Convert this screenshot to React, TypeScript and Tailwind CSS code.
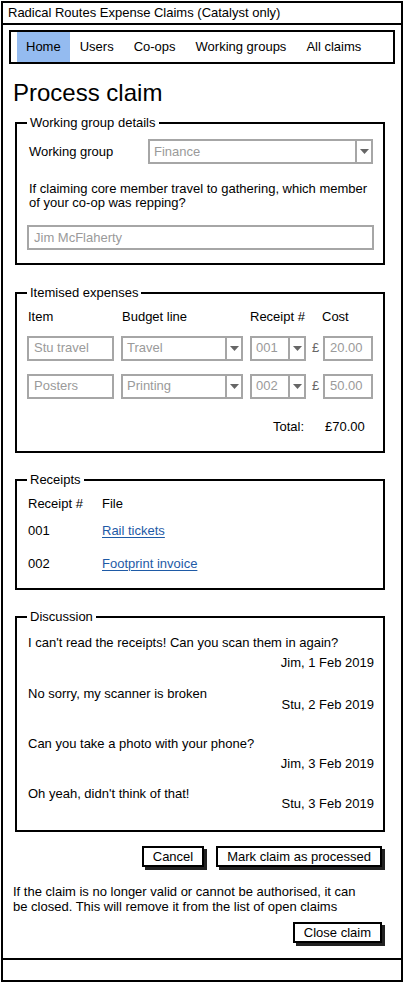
import React from 'react';

const font = { fontFamily: '"Liberation Sans", Arial, sans-serif' };

const Box = ({ w, h = 'h-[25px]', children, cls = '' }: { w: string; h?: string; children?: React.ReactNode; cls?: string }) => (
  <div className={`${w} ${h} ${cls} shrink-0 border-2 border-[#a6a6a6] bg-white flex items-center px-[5px] text-[#9a9a9a] text-[13px]`}>
    {children}
  </div>
);

const Select = ({ w, value }: { w: string; value: string }) => (
  <div className={`${w} h-[25px] shrink-0 border-2 border-[#a6a6a6] bg-white flex items-stretch text-[#9a9a9a] text-[13px]`}>
    <div className="flex-1 flex items-center px-[4px]">{value}</div>
    <div className="w-[16px] border-l-2 border-[#a6a6a6] flex items-center justify-center">
      <svg width="9" height="5" viewBox="0 0 9 5">
        <path d="M0 0 L9 0 L4.5 5 Z" fill="#666" />
      </svg>
    </div>
  </div>
);

const Group = ({ title, children, cls = '' }: { title: string; children: React.ReactNode; cls?: string }) => (
  <fieldset className={`shrink-0 ml-[12px] mr-[16px] border-2 border-black pl-[10px] pr-[8px] ${cls}`}>
    <legend className="px-[3px] text-[13px] leading-[16px]">{title}</legend>
    {children}
  </fieldset>
);

const Btn = ({ label, cls = '' }: { label: string; cls?: string }) => (
  <button className={`h-[21px] border-2 border-black bg-white shadow-[3px_3px_0_#222] px-[9px] text-[13px] leading-none ${cls}`}>
    {label}
  </button>
);

const messages = [
  { text: "I can't read the receipts! Can you scan them in again?", by: 'Jim, 1 Feb 2019', gap: 'mt-[3px]', top: 'mt-[1px]' },
  { text: 'No sorry, my scanner is broken', by: 'Stu, 2 Feb 2019', gap: '-mt-[6px]', top: 'mt-[6px]' },
  { text: 'Can you take a photo with your phone?', by: 'Jim, 3 Feb 2019', gap: 'mt-[3px]', top: 'mt-[14px]' },
  { text: "Oh yeah, didn't think of that!", by: 'Stu, 3 Feb 2019', gap: '-mt-[7px]', top: 'mt-[5px]' },
];

export default function App() {
  return (
    <div style={font} className="w-[404px] h-[983px] bg-white text-black text-[13px] pt-[1px] pl-[1px]">
      <div className="w-[402px] h-[981px] border-2 border-black flex flex-col">
        <div className="shrink-0 h-[22px] border-b-2 border-black flex items-center pl-[5px] text-[13px]">
          Radical Routes Expense Claims (Catalyst only)
        </div>

        <nav className="shrink-0 mt-[5px] mx-[6px] h-[34px] border-2 border-black flex items-stretch pl-[6px]">
          <div className="bg-[#94bbf0] px-[9px] flex items-center">Home</div>
          <div className="px-[10px] flex items-center">Users</div>
          <div className="px-[10px] flex items-center">Co-ops</div>
          <div className="px-[10px] flex items-center">Working groups</div>
          <div className="px-[10px] flex items-center">All claims</div>
        </nav>

        <h1 className="shrink-0 mt-[15px] ml-[10px] text-[24px] leading-[28px]">Process claim</h1>

        <Group title="Working group details" cls="mt-[8px] pb-[13px]">
          <div className="mt-[8px] flex items-center">
            <div className="w-[121px] pl-[2px]">Working group</div>
            <Select w="w-[225px]" value="Finance" />
          </div>
          <p className="mt-[18px] pl-[2px] leading-[14px]">
            If claiming core member travel to gathering, which member of your co-op was repping?
          </p>
          <Box w="w-[347px]" cls="mt-[15px]">Jim McFlaherty</Box>
        </Group>

        <Group title="Itemised expenses" cls="mt-[20px] pb-[15px]">
          <div className="mt-[6px] flex pl-[1px]">
            <div className="w-[94px]">Item</div>
            <div className="w-[128px]">Budget line</div>
            <div className="w-[72px]">Receipt #</div>
            <div>Cost</div>
          </div>
          {[
            ['Stu travel', 'Travel', '001', '20.00'],
            ['Posters', 'Printing', '002', '50.00'],
          ].map(([item, line, rec, cost], i) => (
            <div key={item} className={`${i === 0 ? 'mt-[9px]' : 'mt-[13px]'} flex items-center`}>
              <Box w="w-[87px]">{item}</Box>
              <Select w="w-[122px] ml-[7px]" value={line} />
              <Select w="w-[56px] ml-[7px]" value={rec} />
              <span className="ml-[6px] w-[10px] text-[#666]">£</span>
              <Box w="w-[50px]" cls="ml-[1px]">{cost}</Box>
            </div>
          ))}
          <div className="mt-[18px] flex">
            <div className="ml-[246px] w-[52px]">Total:</div>
            <div>£70.00</div>
          </div>
        </Group>

        <Group title="Receipts" cls="mt-[19px] pb-[14px]">
          <div className="mt-[6px] flex">
            <div className="w-[75px] pl-[1px]">Receipt #</div>
            <div>File</div>
          </div>
          <div className="mt-[7px] flex">
            <div className="w-[75px] pl-[1px]">001</div>
            <a className="text-[#1e5aa6] underline underline-offset-2">Rail tickets</a>
          </div>
          <div className="mt-[14px] flex">
            <div className="w-[75px] pl-[1px]">002</div>
            <a className="text-[#1e5aa6] underline underline-offset-2">Footprint invoice</a>
          </div>
        </Group>

        <Group title="Discussion" cls="mt-[19px] pb-[18px]">
          {messages.map((m) => (
            <div key={m.by} className={`${m.top} flex flex-col pl-[1px]`}>
              <div className="mt-[8px] leading-[17px]">{m.text}</div>
              <div className={`${m.gap} self-end leading-[17px] pr-[1px]`}>{m.by}</div>
            </div>
          ))}
        </Group>

        <div className="shrink-0 mt-[14px] flex justify-end gap-[12px] pr-[19px]">
          <Btn label="Cancel" />
          <Btn label="Mark claim as processed" />
        </div>

        <p className="shrink-0 mt-[17px] ml-[10px] w-[358px] leading-[15px]">
          If the claim is no longer valid or cannot be authorised, it can be closed. This will remove it from the list of open claims
        </p>

        <div className="shrink-0 mt-[8px] flex justify-end pr-[19px]">
          <Btn label="Close claim" />
        </div>

        <div className="flex-1" />
        <div className="shrink-0 h-[22px] border-t-2 border-black" />
      </div>
    </div>
  );
}
